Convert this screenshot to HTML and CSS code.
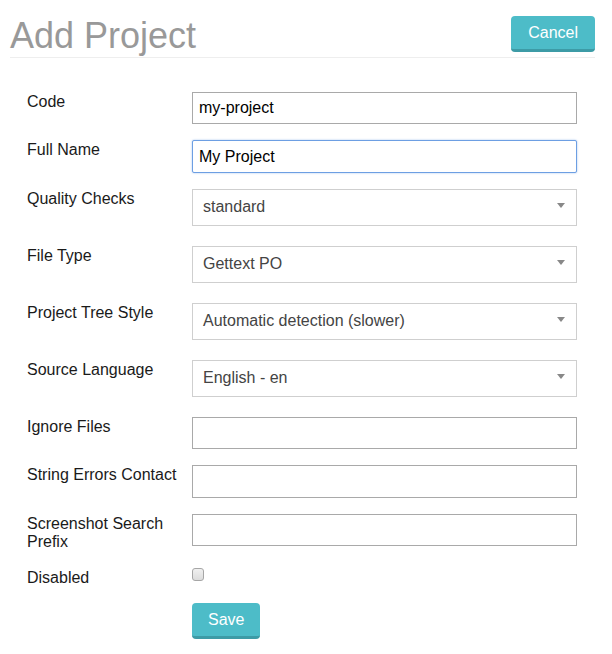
FILE: index.html
```html
<!DOCTYPE html>
<html>
<head>
<meta charset="utf-8">
<link rel="stylesheet" href="styles.css">
</head>
<body>
<div class="page">
  <div class="header">
    <h1 class="title">Add Project</h1>
    <button class="btn">Cancel</button>
  </div>
  <form class="form">
    <div class="row"><label class="label">Code</label><input class="input" type="text" value="my-project"></div>
    <div class="row"><label class="label">Full Name</label><input class="input focused" type="text" value="My Project"></div>
    <div class="row row-select"><label class="label">Quality Checks</label><div class="select"><span class="select-text">standard</span><span class="arrow"></span></div></div>
    <div class="row row-select"><label class="label">File Type</label><div class="select"><span class="select-text">Gettext PO</span><span class="arrow"></span></div></div>
    <div class="row row-select"><label class="label">Project Tree Style</label><div class="select"><span class="select-text">Automatic detection (slower)</span><span class="arrow"></span></div></div>
    <div class="row row-select"><label class="label">Source Language</label><div class="select"><span class="select-text">English - en</span><span class="arrow"></span></div></div>
    <div class="row"><label class="label">Ignore Files</label><input class="input" type="text" value=""></div>
    <div class="row"><label class="label">String Errors Contact</label><input class="input" type="text" value=""></div>
    <div class="row row-tall"><label class="label">Screenshot Search Prefix</label><input class="input" type="text" value=""></div>
    <div class="row row-check"><label class="label">Disabled</label><span class="checkbox"></span></div>
    <div class="row"><span class="label"></span><button class="btn btn-save" type="button">Save</button></div>
  </form>
</div>
</body>
</html>
```

FILE: styles.css
```css
html, body {
  margin: 0;
  padding: 0;
  background: #fff;
}
body {
  font-family: "Liberation Sans", Arial, sans-serif;
  font-size: 16px;
  color: #1a1a1a;
}
.page {
  width: 585px;
  margin-left: 10px;
}
.header {
  display: flex;
  justify-content: space-between;
  align-items: flex-start;
  padding-top: 16px;
  padding-bottom: 1px;
  border-bottom: 1px solid #eee;
}
.title {
  margin: 0;
  font-size: 36px;
  line-height: 40px;
  font-weight: normal;
  color: #999;
}
.btn {
  font-family: "Liberation Sans", Arial, sans-serif;
  font-size: 16px;
  line-height: 18px;
  color: #fff;
  background: #4dbcc8;
  border: 0;
  border-bottom: 3px solid #3d9ba6;
  border-radius: 4px;
  padding: 8px 17px 7px;
  margin: 0;
}
.btn-save {
  justify-self: start;
  padding-left: 16px;
  padding-right: 16px;
}
.form {
  margin-top: 34px;
  padding-left: 17px;
}
.row {
  display: grid;
  grid-template-columns: 165px 385px;
  align-items: start;
  margin-bottom: 16px;
}
.row-select {
  margin-bottom: 20px;
}
.row-tall {
  margin-bottom: 17px;
}
.row-check {
  margin-bottom: 16px;
}
.label {
  font-size: 16px;
  line-height: normal;
  color: #1a1a1a;
  padding-top: 1px;
  padding-right: 10px;
}
.input {
  box-sizing: border-box;
  width: 385px;
  height: 32.4px;
  margin: 0;
  border: 1px solid #a9a9a9;
  border-radius: 0;
  padding: 0 6px;
  font-family: "Liberation Sans", Arial, sans-serif;
  font-size: 16px;
  color: #000;
  background: #fff;
  outline: none;
}
.focused {
  border-color: #6d9fe3;
  border-radius: 2px;
  box-shadow: 0 0 2px rgba(90, 145, 225, 0.6);
}
.select {
  box-sizing: border-box;
  height: 37px;
  border: 1px solid #cfcfcf;
  display: flex;
  align-items: center;
  padding: 0 11px 0 10px;
  color: #444;
}
.select-text {
  flex: 1;
}
.arrow {
  width: 0;
  height: 0;
  border-top: 5px solid #888;
  border-left: 4.5px solid transparent;
  border-right: 4.5px solid transparent;
  margin-top: -3px;
}
.checkbox {
  box-sizing: border-box;
  display: block;
  width: 12px;
  height: 13px;
  margin-top: 0;
  border: 1px solid #a6a6a6;
  border-radius: 3px;
  background: linear-gradient(#f0f0f0, #dcdcdc);
}
```
